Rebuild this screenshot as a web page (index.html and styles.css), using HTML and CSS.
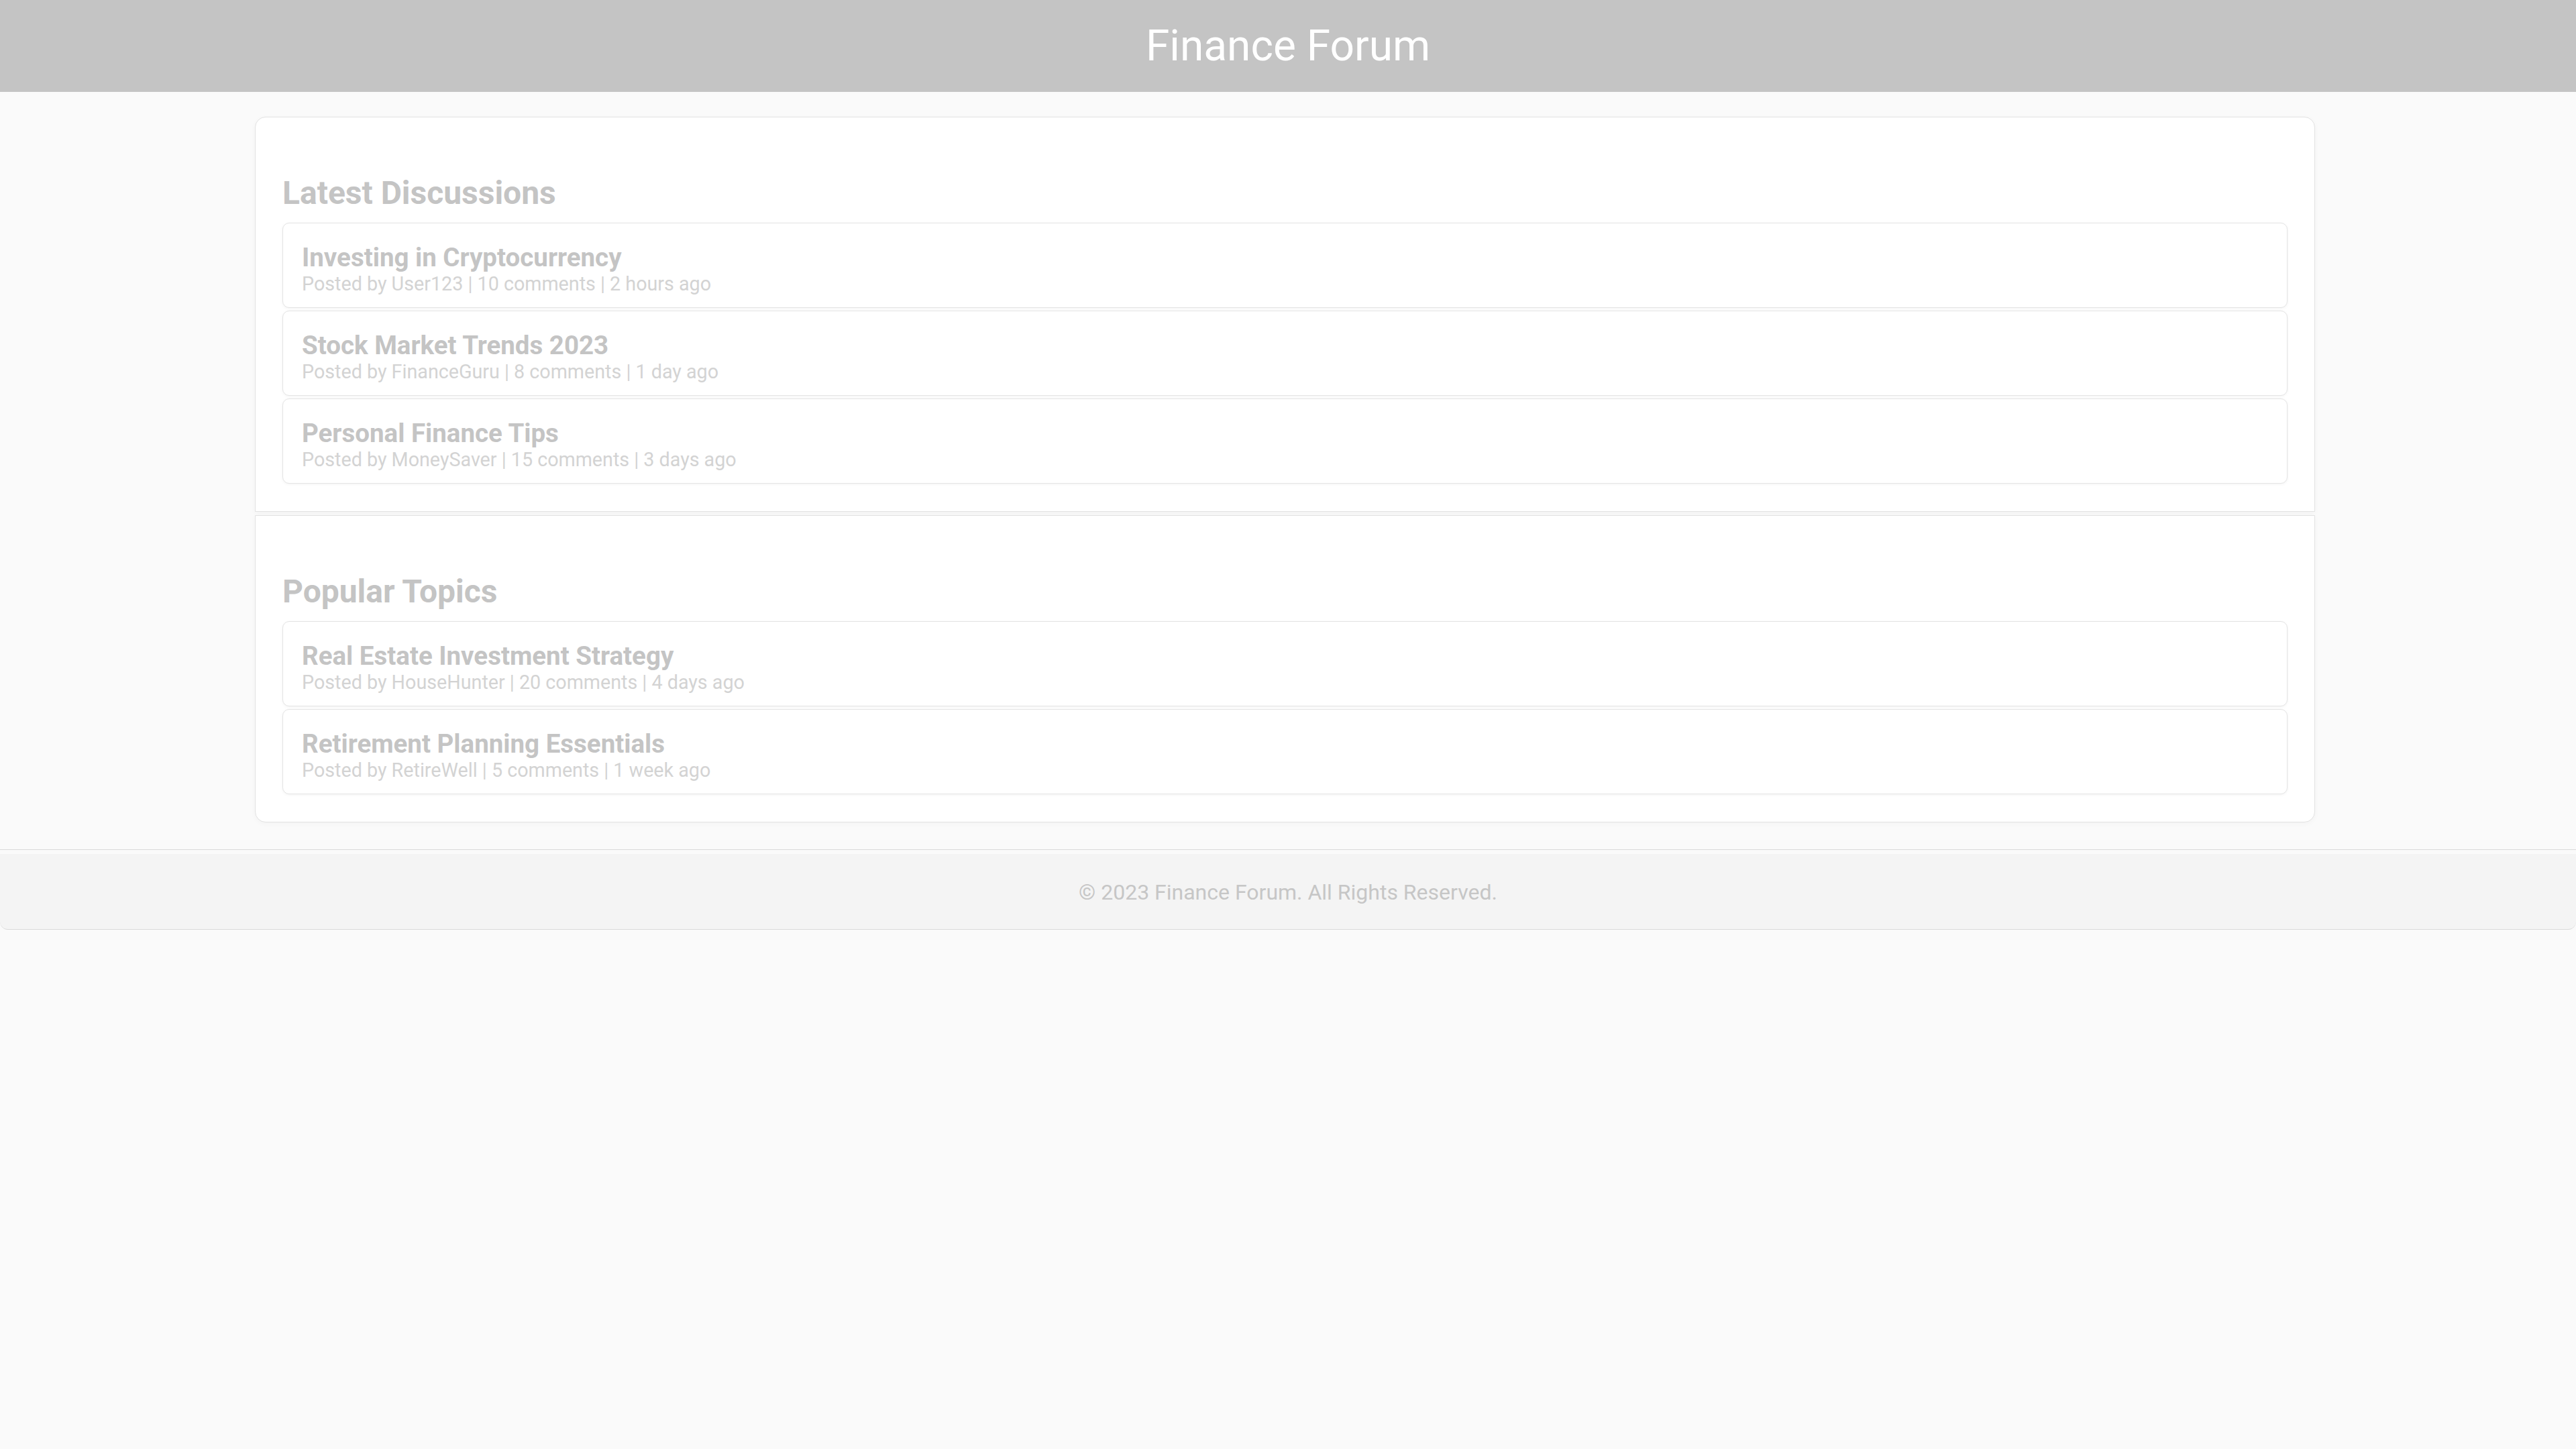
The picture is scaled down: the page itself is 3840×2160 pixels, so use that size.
FILE: index.html
```html
<!DOCTYPE html>
<html lang="en">
<head>
<meta charset="utf-8">
<title>Finance Forum</title>
<link rel="stylesheet" href="styles.css">
</head>
<body>
<header class="site-header">
  <h1 class="site-title">Finance Forum</h1>
</header>
<main class="content">
  <section class="panel">
    <h2 class="panel-title">Latest Discussions</h2>
    <div class="post-list">
      <article class="post">
        <h3 class="post-title">Investing in Cryptocurrency</h3>
        <p class="post-meta">Posted by User123 | 10 comments | 2 hours ago</p>
      </article>
      <article class="post">
        <h3 class="post-title">Stock Market Trends 2023</h3>
        <p class="post-meta">Posted by FinanceGuru | 8 comments | 1 day ago</p>
      </article>
      <article class="post">
        <h3 class="post-title">Personal Finance Tips</h3>
        <p class="post-meta">Posted by MoneySaver | 15 comments | 3 days ago</p>
      </article>
    </div>
  </section>
  <section class="panel">
    <h2 class="panel-title">Popular Topics</h2>
    <div class="post-list">
      <article class="post">
        <h3 class="post-title">Real Estate Investment Strategy</h3>
        <p class="post-meta">Posted by HouseHunter | 20 comments | 4 days ago</p>
      </article>
      <article class="post">
        <h3 class="post-title">Retirement Planning Essentials</h3>
        <p class="post-meta">Posted by RetireWell | 5 comments | 1 week ago</p>
      </article>
    </div>
  </section>
</main>
<footer class="site-footer">
  <p class="footer-text">&copy; 2023 Finance Forum. All Rights Reserved.</p>
</footer>
</body>
</html>
```
FILE: styles.css
```css
html, body {
  margin: 0;
  padding: 0;
}
body {
  background: #fafafa;
  font-family: Roboto, "Liberation Sans", Arial, sans-serif;
  min-height: 2160px;
}
.site-header {
  background: #c4c4c4;
  padding: 31px 0;
  text-align: center;
}
.site-title {
  margin: 0;
  font-size: 64px;
  font-weight: 400;
  color: #ffffff;
  line-height: normal;
}
.content {
  width: 3071px;
  box-sizing: border-box;
  margin: 37px 0 0 380px;
  display: flex;
  flex-direction: column;
  gap: 5px;
}
.panel {
  background: #ffffff;
  border: 1px solid #e2e2e2;
  padding: 41px 40px 41px;
  box-shadow: 0 2px 8px rgba(0, 0, 0, 0.03);
}
.panel:first-child {
  border-radius: 16px 16px 0 0;
}
.panel:last-child {
  border-radius: 0 0 16px 16px;
}
.panel-title {
  margin: 43px 0 16px;
  font-size: 48px;
  font-weight: 700;
  color: #c4c4c4;
  line-height: normal;
}
.post-list {
  display: flex;
  flex-direction: column;
  gap: 4px;
}
.post {
  background: #ffffff;
  border: 1px solid #e4e4e4;
  border-radius: 10px;
  padding: 28px 28px 18px;
  box-shadow: 0 1px 4px rgba(0, 0, 0, 0.05);
}
.post-title {
  margin: 0;
  font-size: 38.5px;
  font-weight: 700;
  color: #c4c4c4;
  line-height: normal;
}
.post-meta {
  margin: 0;
  font-size: 28.7px;
  color: #d3d3d3;
  line-height: normal;
}
.site-footer {
  margin-top: 40px;
  background: #f4f4f4;
  border-top: 1px solid #d9d9d9;
  border-bottom: 1px solid #dadada;
  border-radius: 0 0 12px 12px;
  box-shadow: inset 0 6px 0 #fafafa;
  padding: 44px 0 36px;
  text-align: center;
}
.footer-text {
  margin: 0;
  font-size: 32px;
  color: #c6c6c6;
  line-height: normal;
}
```
